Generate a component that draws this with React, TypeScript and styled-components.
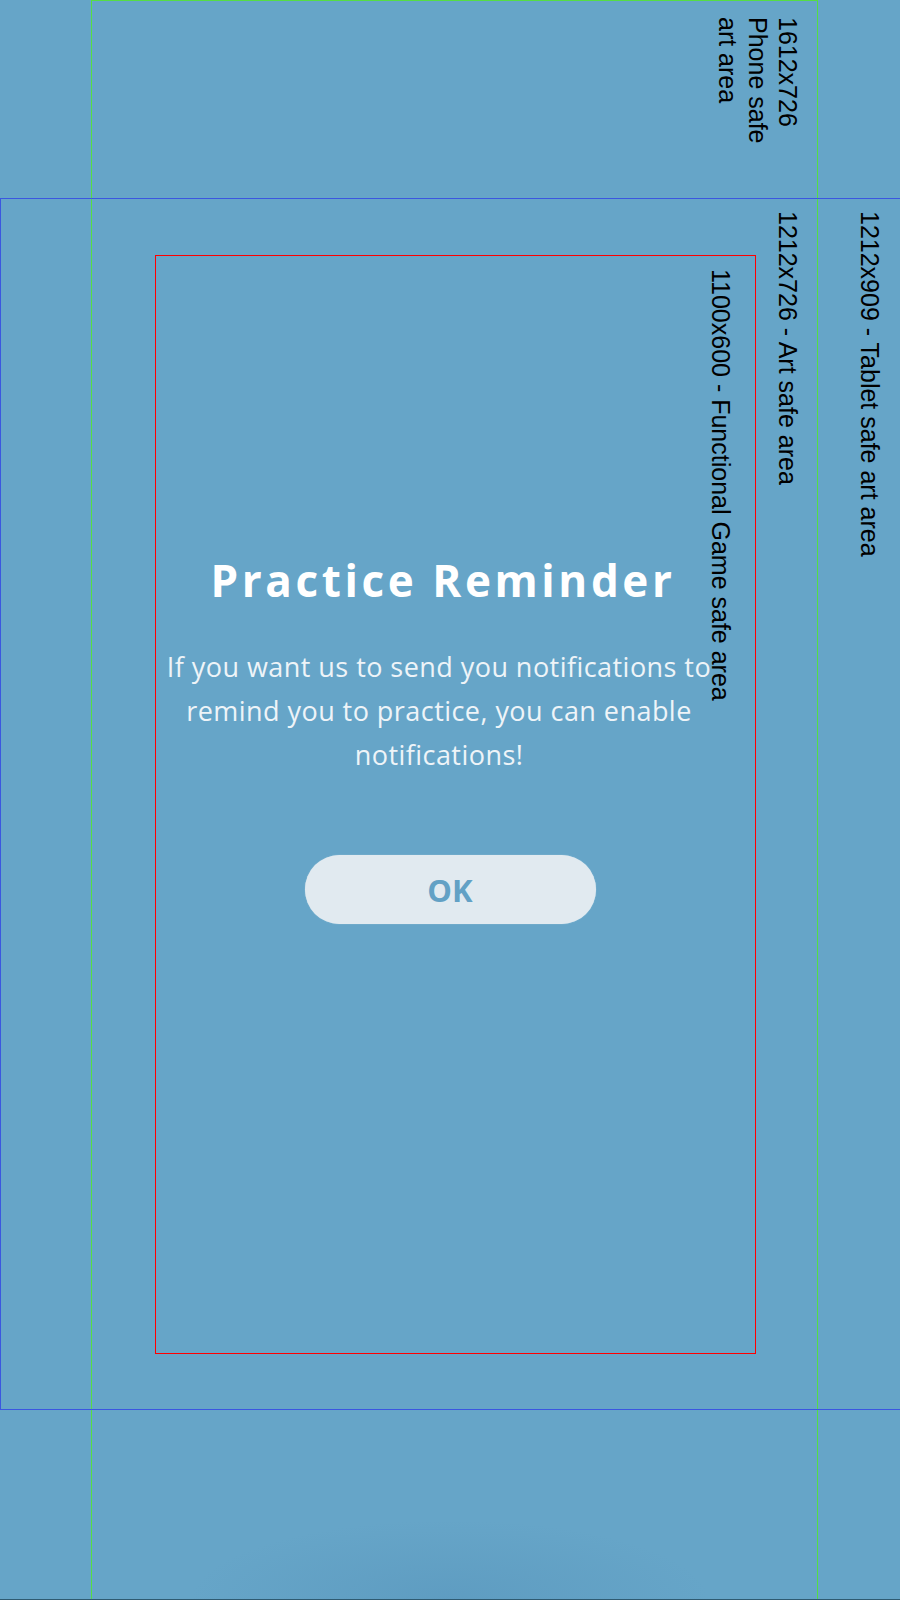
import styled, { createGlobalStyle } from "styled-components";

const GlobalStyle = createGlobalStyle`
  html, body {
    margin: 0;
    padding: 0;
    background: #66a5c8;
  }
  * {
    box-sizing: border-box;
  }
`;

const Stage = styled.div`
  position: relative;
  width: 900px;
  height: 1600px;
  overflow: hidden;
  background: radial-gradient(
      ellipse 260px 80px at 450px 1600px,
      rgba(80, 140, 180, 0.35),
      rgba(102, 165, 200, 0) 100%
    ),
    #66a5c8;
  border-bottom: 1px solid #2f5b72;
  display: flex;
  flex-direction: column;
  align-items: center;
`;

// safe-area guides sit over the artwork, at their own coordinates
const GuideBox = styled.div<{ $color: string; $left: number; $top: number; $w: number; $h: number }>`
  position: absolute;
  left: ${(p) => p.$left}px;
  top: ${(p) => p.$top}px;
  width: ${(p) => p.$w}px;
  height: ${(p) => p.$h}px;
  border: 1px solid ${(p) => p.$color};
  pointer-events: none;
`;

const GuideLabel = styled.div<{ $right: number; $top: number }>`
  position: absolute;
  right: ${(p) => p.$right}px;
  top: ${(p) => p.$top}px;
  writing-mode: vertical-rl;
  font-family: "Liberation Sans", Arial, sans-serif;
  font-size: 25px;
  line-height: 30px;
  color: #000;
  white-space: nowrap;
`;

const Dialog = styled.div`
  width: 600px;
  margin-top: 558px;
  display: flex;
  flex-direction: column;
  align-items: center;
  font-family: "Open Sans", "Noto Sans", sans-serif;
`;

const Title = styled.h1`
  margin: 0 14px 0 0;
  font-size: 44px;
  line-height: 44px;
  font-weight: 700;
  letter-spacing: 3.6px;
  color: #fff;
`;

const Message = styled.p`
  margin: 43px 22px 0 0;
  width: 600px;
  font-size: 27px;
  line-height: 44px;
  font-weight: 400;
  letter-spacing: 0.45px;
  text-align: center;
  color: #eef4f8;
`;

const OkButton = styled.button`
  margin-top: 78px;
  width: 291px;
  height: 69px;
  border: none;
  border-radius: 35px;
  background: #e1eaf0;
  box-shadow: 0 0 1px rgba(240, 246, 250, 0.7);
  font-family: "Open Sans", "Noto Sans", sans-serif;
  font-size: 31px;
  font-weight: 700;
  color: #62a1c5;
  cursor: pointer;
`;

export default function App() {
  return (
    <>
      <GlobalStyle />
      <Stage>
        <GuideBox $color="#55dd44" $left={91} $top={0} $w={727} $h={1612} />
        <GuideBox $color="#3b57e0" $left={0} $top={198} $w={910} $h={1212} />
        <GuideBox $color="#ff0000" $left={155} $top={255} $w={601} $h={1099} />

        <GuideLabel $right={97} $top={17}>
          1612x726
          <br />
          Phone safe
          <br />
          art area
        </GuideLabel>
        <GuideLabel $right={15} $top={211}>
          1212x909 - Tablet safe art area
        </GuideLabel>
        <GuideLabel $right={97} $top={211}>
          1212x726 - Art safe area
        </GuideLabel>
        <GuideLabel $right={164} $top={269}>
          1100x600 - Functional Game safe area
        </GuideLabel>

        <Dialog>
          <Title>Practice Reminder</Title>
          <Message>
            If you want us to send you notifications to remind you to practice,
            you can enable notifications!
          </Message>
          <OkButton>OK</OkButton>
        </Dialog>
      </Stage>
    </>
  );
}
